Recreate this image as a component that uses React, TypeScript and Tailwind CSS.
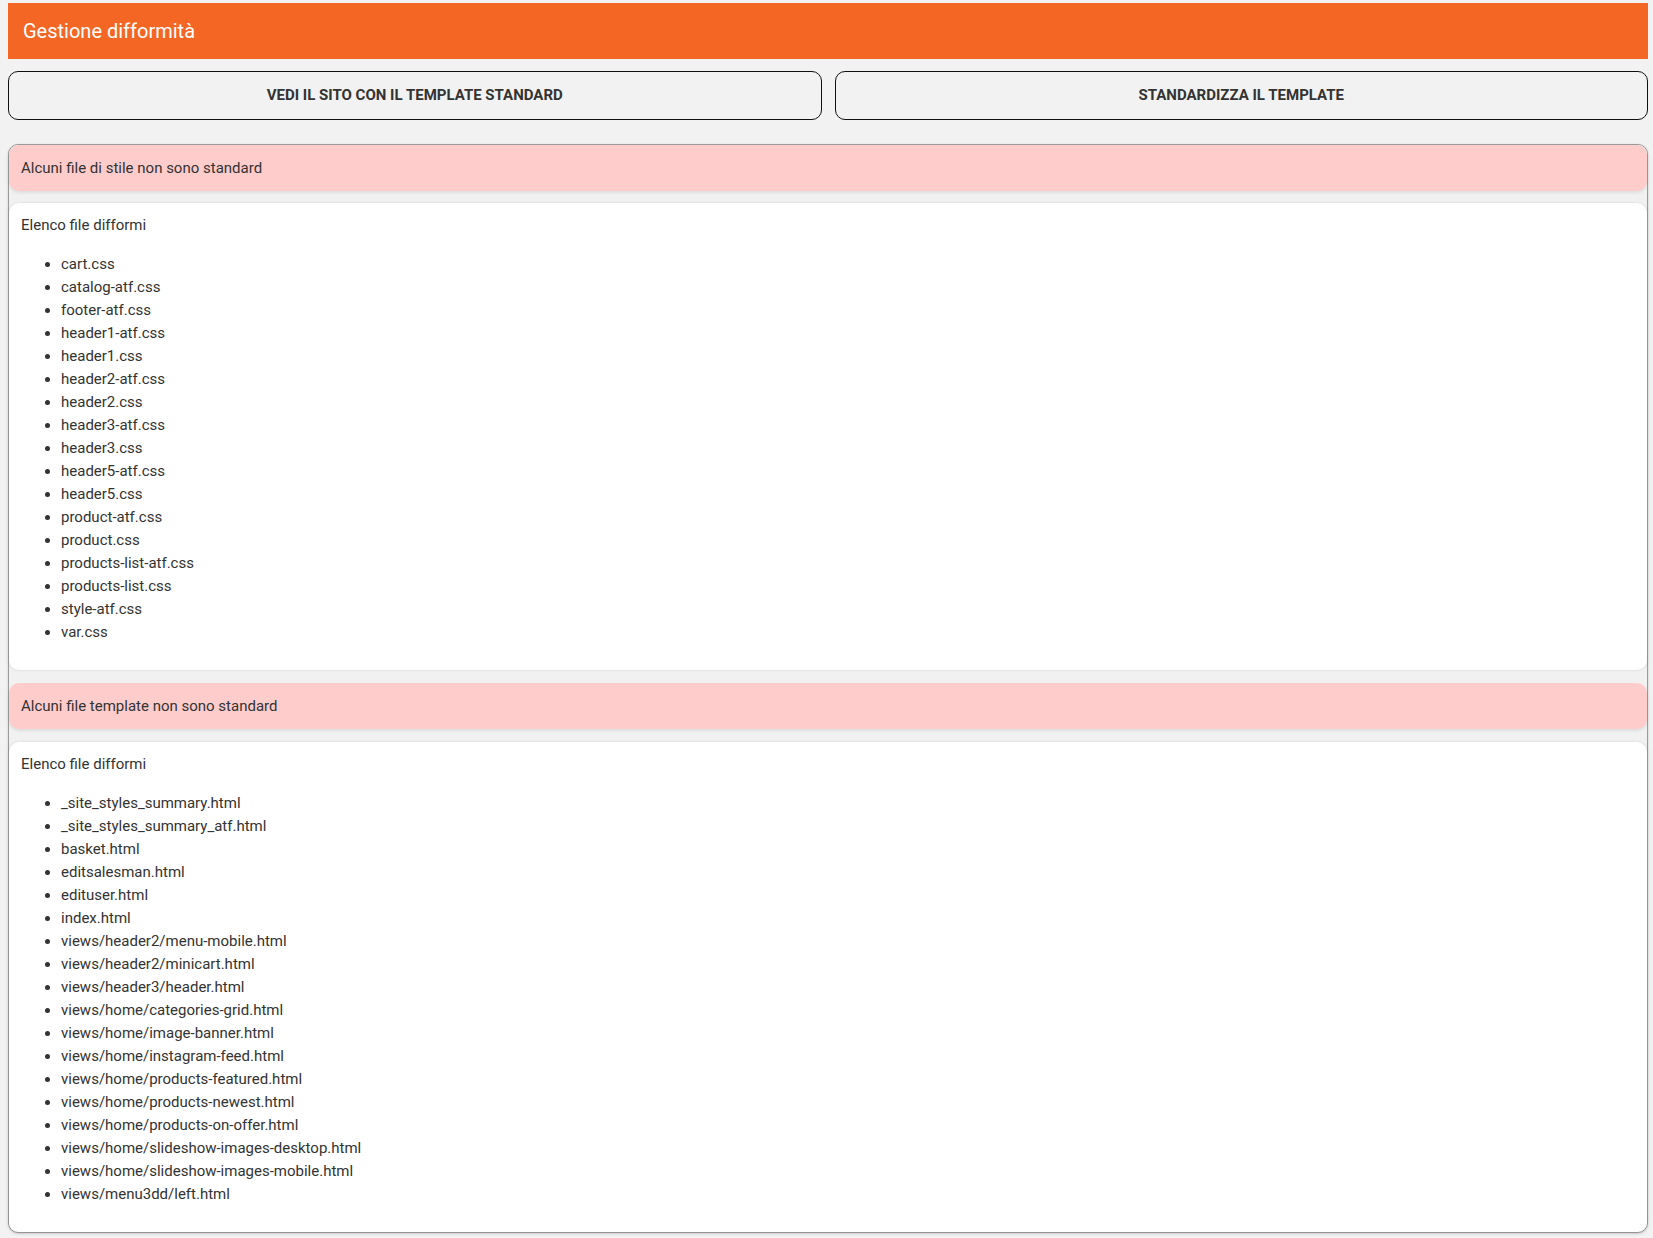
import React from "react";

const styleFiles = [
  "cart.css",
  "catalog-atf.css",
  "footer-atf.css",
  "header1-atf.css",
  "header1.css",
  "header2-atf.css",
  "header2.css",
  "header3-atf.css",
  "header3.css",
  "header5-atf.css",
  "header5.css",
  "product-atf.css",
  "product.css",
  "products-list-atf.css",
  "products-list.css",
  "style-atf.css",
  "var.css",
];

const templateFiles = [
  "_site_styles_summary.html",
  "_site_styles_summary_atf.html",
  "basket.html",
  "editsalesman.html",
  "edituser.html",
  "index.html",
  "views/header2/menu-mobile.html",
  "views/header2/minicart.html",
  "views/header3/header.html",
  "views/home/categories-grid.html",
  "views/home/image-banner.html",
  "views/home/instagram-feed.html",
  "views/home/products-featured.html",
  "views/home/products-newest.html",
  "views/home/products-on-offer.html",
  "views/home/slideshow-images-desktop.html",
  "views/home/slideshow-images-mobile.html",
  "views/menu3dd/left.html",
];

function AlertHeader({ text }: { text: string }) {
  return (
    <div className="h-[46px] flex items-center px-[12px] bg-[#ffcccc] rounded-[10px] shadow-[0_2px_3px_rgba(0,0,0,0.08)] text-[15px] text-[#333]">
      {text}
    </div>
  );
}

function FileList({ files }: { files: string[] }) {
  return (
    <div className="bg-white rounded-[10px] shadow-[0_0_3px_rgba(0,0,0,0.12)] pt-[11px] pb-[26px] px-[12px] text-[15px] text-[#333]">
      <div className="leading-[22px]">Elenco file difformi</div>
      <ul className="list-disc pl-[40px] mt-[17px] leading-[23px]">
        {files.map((f) => (
          <li key={f}>{f}</li>
        ))}
      </ul>
    </div>
  );
}

export default function App() {
  return (
    <div
      className="min-h-screen bg-[#f2f2f2] pt-[3px] pl-[8px] pr-[5px] pb-[7px]"
      style={{ fontFamily: "Roboto, 'Noto Sans', sans-serif" }}
    >
      <div className="h-[56px] bg-[#f46624] flex items-center pl-[15px] text-white text-[20px]">
        Gestione difformità
      </div>

      <div className="grid grid-cols-2 gap-[13px] mt-[12px]">
        <button className="h-[49px] rounded-[10px] border border-[#111] bg-[#f2f2f2] text-[15px] font-bold uppercase text-[#333]">
          Vedi il sito con il template standard
        </button>
        <button className="h-[49px] rounded-[10px] border border-[#111] bg-[#f2f2f2] text-[15px] font-bold uppercase text-[#333]">
          Standardizza il template
        </button>
      </div>

      <div className="mt-[24px] border border-[#9a9a9a] rounded-[10px] bg-[#f1f1f1] shadow-[0_1px_3px_rgba(0,0,0,0.15)] flex flex-col">
        <AlertHeader text="Alcuni file di stile non sono standard" />
        <div className="mt-[12px]">
          <FileList files={styleFiles} />
        </div>
        <div className="mt-[13px]">
          <AlertHeader text="Alcuni file template non sono standard" />
        </div>
        <div className="mt-[13px]">
          <FileList files={templateFiles} />
        </div>
      </div>
    </div>
  );
}
